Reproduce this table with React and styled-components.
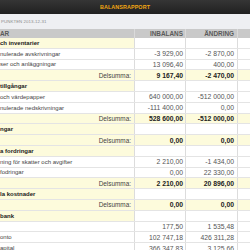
import React from 'react';
import styled, { createGlobalStyle } from 'styled-components';

const GlobalStyle = createGlobalStyle`
  html, body {
    margin: 0;
    padding: 0;
    background: #fff;
  }
  body {
    font-family: 'Liberation Sans', Arial, sans-serif;
    overflow: hidden;
  }
`;

const rows = [
  { type: 'group', label: 'ch inventarier' },
  { label: 'nulerade avskrivningar', ib: '-3 929,00', diff: '-2 870,00' },
  { label: 'ser och anläggningar', ib: '13 096,40', diff: '400,00' },
  { type: 'sum', ib: '9 167,40', diff: '-2 470,00' },
  { type: 'group', label: 'tillgångar' },
  { label: 'och värdepapper', ib: '640 000,00', diff: '-512 000,00' },
  { label: 'nulerade nedskrivningar', ib: '-111 400,00', diff: '0,00' },
  { type: 'sum', ib: '528 600,00', diff: '-512 000,00' },
  { type: 'group', label: 'ngar' },
  { type: 'sum', ib: '0,00', diff: '0,00' },
  { type: 'group', label: 'a fordringar' },
  { label: 'ning för skatter och avgifter', ib: '2 210,00', diff: '-1 434,00' },
  { label: 'fodringar', ib: '0,00', diff: '22 330,00' },
  { type: 'sum', ib: '2 210,00', diff: '20 896,00' },
  { type: 'group', label: 'la kostnader' },
  { type: 'sum', ib: '0,00', diff: '0,00' },
  { type: 'group', label: 'bank' },
  { label: '', ib: '177,50', diff: '1 535,48' },
  { label: 'onto', ib: '102 747,18', diff: '426 311,28' },
  { label: 'apital', ib: '366 347,83', diff: '3 125,66' },
];

const App = () => {
  return (
    <Page>
      <GlobalStyle />
      <TitleBar>
        <Title>BALANSRAPPORT</Title>
      </TitleBar>
      <SubBar>
        <SubText>PUNKTEN 2013-12-31</SubText>
      </SubBar>
      <Table>
        <HeadRow>
          <HeadCell>AR</HeadCell>
          <HeadCell $right>INBALANS</HeadCell>
          <HeadCell $right $wide>ÄNDRING</HeadCell>
          <HeadCell />
        </HeadRow>
        {rows.map((r, i) => (
          <Row key={i} $type={r.type}>
            {r.type === 'sum' ? (
              <SumLabel>Delsumma:</SumLabel>
            ) : (
              <Label $bold={r.type === 'group'}>{r.label}</Label>
            )}
            <Num $bold={r.type === 'sum'}>{r.ib || ''}</Num>
            <Num $bold={r.type === 'sum'} $wide>
              {r.diff || ''}
            </Num>
            <Num />
          </Row>
        ))}
      </Table>
    </Page>
  );
};

const Page = styled.div`
  width: 250px;
  height: 250px;
  overflow: hidden;
  display: flex;
  flex-direction: column;
`;

const TitleBar = styled.header`
  height: 14px;
  flex: none;
  display: flex;
  align-items: center;
  justify-content: center;
  background: linear-gradient(#353535, #202020);
`;

const Title = styled.h1`
  margin: 0;
  font-size: 5.4px;
  font-weight: 700;
  color: #f2a712;
  letter-spacing: 0.1px;
`;

const SubBar = styled.div`
  height: 15px;
  flex: none;
  display: flex;
  align-items: center;
  background: #eeeff2;
  padding-left: 1px;
`;

const SubText = styled.span`
  font-size: 4.4px;
  color: #8c8c8c;
  letter-spacing: 0.05px;
`;

const Table = styled.div`
  display: flex;
  flex-direction: column;
`;

const cols = '135px 51px 52px 1fr';

const HeadRow = styled.div`
  display: grid;
  grid-template-columns: ${cols};
  height: 9px;
  background: #c9c9c9;
`;

const HeadCell = styled.div`
  display: flex;
  align-items: center;
  justify-content: ${(p) => (p.$right ? 'flex-end' : 'flex-start')};
  padding-right: ${(p) => (p.$wide ? '3px' : '2px')};
  font-size: 6.4px;
  font-weight: 700;
  color: #5a5a5a;
  white-space: nowrap;
  overflow: hidden;
  border-right: 1px solid #dadada;
  box-sizing: border-box;
  &:last-child {
    border-right: none;
  }
`;

const Row = styled.div`
  display: grid;
  grid-template-columns: ${cols};
  height: 10.8px;
  box-sizing: border-box;
  border-bottom: 1px solid #e4e4e4;
  background: ${(p) => (p.$type === 'sum' ? '#fdfbdc' : '#fff')};
  & > :first-child {
    background: ${(p) => (p.$type === 'group' ? '#fdfbdc' : 'transparent')};
  }
`;

const Cell = styled.div`
  display: flex;
  align-items: center;
  white-space: nowrap;
  overflow: hidden;
  box-sizing: border-box;
  border-right: 1px solid #dcdcdc;
  color: #3a3a3a;
`;

const Label = styled(Cell)`
  font-size: 6px;
  font-weight: ${(p) => (p.$bold ? 700 : 400)};
  color: ${(p) => (p.$bold ? '#222' : '#444')};
`;

const SumLabel = styled(Cell)`
  justify-content: flex-end;
  padding-right: 3px;
  font-size: 6.4px;
  color: #444;
`;

const Num = styled(Cell)`
  justify-content: flex-end;
  padding-right: ${(p) => (p.$wide ? '3px' : '2px')};
  font-size: 6.8px;
  font-weight: ${(p) => (p.$bold ? 700 : 400)};
  color: ${(p) => (p.$bold ? '#222' : '#555')};
  &:last-child {
    border-right: none;
  }
`;

export default App;
